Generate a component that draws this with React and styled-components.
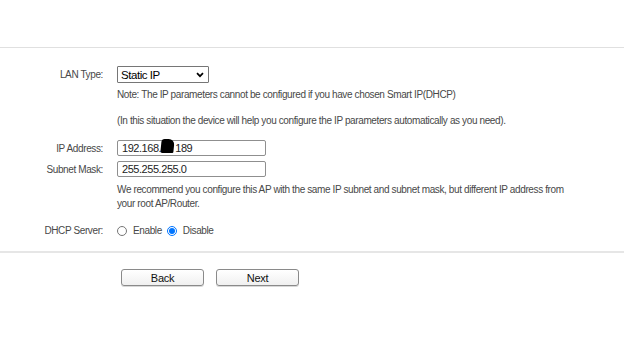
import React from "react";
import styled, { createGlobalStyle } from "styled-components";

const Global = createGlobalStyle`
  html, body { margin: 0; padding: 0; background: #fff; }
  body { font-family: "Liberation Sans", Arial, sans-serif; }
`;

const Page = styled.div`
  width: 624px;
  height: 353px;
  padding-top: 47px;
  box-sizing: border-box;
`;

const Rule = styled.div`
  height: ${(p) => p.$h || 1}px;
  background: ${(p) => p.$c || "#e0e0e0"};
`;

const Form = styled.div`
  display: flex;
  flex-direction: column;
  padding-top: 18px;
  padding-bottom: 15px;
`;

const Row = styled.div`
  display: flex;
  align-items: center;
  margin-top: ${(p) => p.$mt || 0}px;
`;

const Label = styled.div`
  width: 117px;
  flex: none;
  text-align: right;
  padding-right: 14px;
  box-sizing: border-box;
  font-size: 10px;
  letter-spacing: -0.38px;
  color: #484848;
`;

const Field = styled.div`
  display: flex;
  align-items: center;
`;

const Select = styled.div`
  width: 92px;
  height: 17px;
  box-sizing: border-box;
  border: 1px solid #767676;
  border-radius: 1px;
  display: flex;
  align-items: center;
  justify-content: space-between;
  padding: 0 4px 0 3px;
  font-size: 11.5px;
  letter-spacing: -0.45px;
  color: #000;
`;

const Input = styled.div`
  width: 149px;
  height: 16px;
  box-sizing: border-box;
  border: 1px solid #8f8f8f;
  border-radius: 2px;
  display: flex;
  align-items: center;
  padding-left: 4px;
  font-size: 11px;
  letter-spacing: -0.45px;
  color: #222;
  overflow: visible;
`;

const Blot = styled.span`
  display: inline-block;
  width: 13px;
  height: 14px;
  background: #000;
  border-radius: 3px 6px 1px 2px;
  transform: skewX(-6deg);
  margin: -4px 1px 0 0;
`;

const Text = styled.div`
  margin-left: 117px;
  font-size: 10px;
  letter-spacing: -0.38px;
  line-height: ${(p) => p.$lh || 13}px;
  color: #484848;
  margin-top: ${(p) => p.$mt || 0}px;
`;

const RadioLabel = styled.label`
  display: flex;
  align-items: center;
  gap: 6px;
  font-size: 10px;
  letter-spacing: -0.38px;
  color: #484848;
  margin-right: 5px;
`;

const Radio = styled.span`
  width: 10px;
  height: 10px;
  box-sizing: border-box;
  border-radius: 50%;
  border: 1px solid ${(p) => (p.$on ? "#0075ff" : "#767676")};
  display: flex;
  align-items: center;
  justify-content: center;
  &::after {
    content: "";
    width: 6px;
    height: 6px;
    border-radius: 50%;
    background: ${(p) => (p.$on ? "#0075ff" : "transparent")};
  }
`;

const Buttons = styled.div`
  display: flex;
  gap: 12px;
  padding-left: 121px;
  padding-top: 16px;
`;

const Button = styled.div`
  width: 83px;
  height: 17px;
  box-sizing: border-box;
  border: 1px solid #8a8a8a;
  border-radius: 3px;
  background: linear-gradient(#ffffff, #f0f0f0);
  box-shadow: 0 1px 0 #d8d8d8;
  display: flex;
  align-items: center;
  justify-content: center;
  font-size: 11px;
  letter-spacing: -0.3px;
  color: #111;
`;

function Chevron() {
  return (
    <svg width="8" height="6" viewBox="0 0 8 6">
      <path d="M1 1.2 L4 4.2 L7 1.2" fill="none" stroke="#000" strokeWidth="1.7" />
    </svg>
  );
}

export default function App() {
  return (
    <Page>
      <Global />
      <Rule />
      <Form>
        <Row>
          <Label>LAN Type:</Label>
          <Select>
            <span>Static IP</span>
            <Chevron />
          </Select>
        </Row>
        <Text $mt={5}>Note: The IP parameters cannot be configured if you have chosen Smart IP(DHCP)</Text>
        <Text $mt={13}>(In this situation the device will help you configure the IP parameters automatically as you need).</Text>
        <Row $mt={13}>
          <Label>IP Address:</Label>
          <Input>
            192.168.<Blot />189
          </Input>
        </Row>
        <Row $mt={5}>
          <Label>Subnet Mask:</Label>
          <Input>255.255.255.0</Input>
        </Row>
        <Text $mt={6} $lh={14}>
          We recommend you configure this AP with the same IP subnet and subnet mask, but different IP address from
          <br />
          your root AP/Router.
        </Text>
        <Row $mt={14}>
          <Label>DHCP Server:</Label>
          <Field>
            <RadioLabel>
              <Radio />
              Enable
            </RadioLabel>
            <RadioLabel>
              <Radio $on />
              Disable
            </RadioLabel>
          </Field>
        </Row>
      </Form>
      <Rule $h={2} $c="#e6e6e6" />
      <Buttons>
        <Button>Back</Button>
        <Button>Next</Button>
      </Buttons>
    </Page>
  );
}
